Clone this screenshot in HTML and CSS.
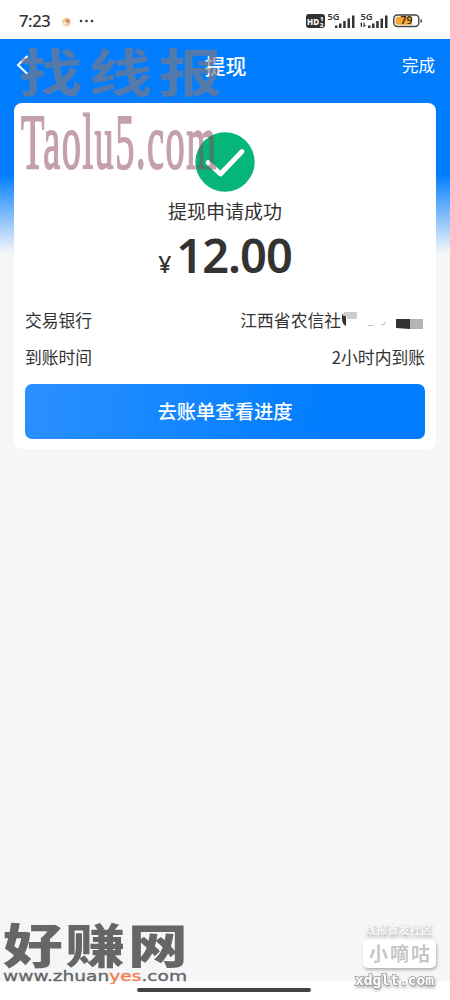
FILE: index.html
```html
<!DOCTYPE html>
<html lang="zh-CN">
<head>
<meta charset="utf-8">
<title>提现</title>
<link rel="stylesheet" href="styles.css">
</head>
<body>
<div class="screen">
  <div class="status">
    <span class="clock">7:23</span>
    <svg class="status-left" width="34" height="16" viewBox="0 0 34 16">
      <circle cx="6.500" cy="9" r="4.300" fill="#ecc9a9"/><circle cx="7.500" cy="8" r="2" fill="#d88f59"/><circle cx="5" cy="10" r="1.600" fill="#f8eadc"/>
      <g fill="#333"><circle cx="21" cy="8" r="1.300"/><circle cx="26.500" cy="8" r="1.300"/><circle cx="32" cy="8" r="1.300"/></g>
    </svg>
    <svg class="status-right" width="120" height="18" viewBox="0 0 120 18">
      <rect x="2" y="2" width="19" height="14" rx="3" fill="#333"/>
      <text class="sys heavy" x="3" y="12.500" font-size="9" fill="#fff" textLength="12" lengthAdjust="spacingAndGlyphs">HD</text>
      <text class="sys heavy" x="16" y="8.500" font-size="6" fill="#fff">1</text>
      <text class="sys heavy" x="16" y="15" font-size="6" fill="#fff">2</text>
      <g fill="#333">
        <text class="sys semi" x="23.500" y="8" font-size="8.500" textLength="12" lengthAdjust="spacingAndGlyphs">5G</text>
        <path d="M31 13.500h2.500V16H31zM35 11.500h2.500V16H35zM39.200 9h2.500v7h-2.500zM43.500 6.500H46V16h-2.500zM48 3.500h2.500V16H48z"/>
        <text class="sys semi" x="56.500" y="8" font-size="8.500" textLength="12" lengthAdjust="spacingAndGlyphs">5G</text>
        <path d="M64 13.500h2.500V16H64zM68 11.500h2.500V16H68zM72.200 9h2.500v7h-2.500zM76.500 6.500H79V16h-2.500zM81 3.500h2.500V16H81z"/>
        <path d="M56 12l2-2v5h-1.200v-2.500zM59.500 15.500v-5h1.200v2.500h1.500z"/>
      </g>
      <rect x="89.800" y="3" width="25" height="11.500" rx="3.500" fill="#fff" stroke="#444" stroke-width="1.400"/>
      <path d="M93.500 4.700H108v8H93.500q-2 0-2-2v-4q0-2 2-2z" fill="#f5a837"/>
      <path d="M116.500 7v4q1.700-.5 1.700-2t-1.700-2z" fill="#444"/>
      <text class="sys semi" x="96.500" y="12.300" font-size="10" fill="#3b2c17" textLength="12" lengthAdjust="spacingAndGlyphs">79</text>
    </svg>
  </div>
  <div class="body">
    <header class="bar">
      <svg class="back" width="14" height="22" viewBox="0 0 14 22"><path d="M11.500 2L2 11l9.500 9" fill="none" stroke="#fff" stroke-width="2"/></svg>
      <h1 class="title">提现</h1>
      <span class="done">完成</span>
    </header>
    <main class="card">
      <svg class="tick" width="60" height="60" viewBox="0 0 60 60"><circle cx="30" cy="30" r="29.700" fill="#06b578"/><path d="M13 30.500L25.500 42 47 19.500" fill="none" stroke="#fff" stroke-width="4.800" stroke-linecap="round" stroke-linejoin="round"/></svg>
      <p class="message">提现申请成功</p>
      <p class="amount"><span class="yen">¥</span><span class="value">12.00</span></p>
      <div class="row"><span>交易银行</span><span class="bank">江西省农信社
        <svg class="mask" width="84" height="20" viewBox="0 0 84 20"><path d="M1 4l4 2v10q-4-2-4-7z" fill="#333"/><path d="M3 2h13v7H6V6H2z" fill="#ccc"/><path d="M27 15h5v1h-5zM40 14h4v1h-4zM43 12h2v1h-2z" fill="#bbb"/><path d="M55 9h14v10l-14-1z" fill="#333"/><path d="M69 9h13v10H69z" fill="#b4b4b4"/></svg>
      </span></div>
      <div class="row"><span>到账时间</span><span>2小时内到账</span></div>
      <button class="action">去账单查看进度</button>
    </main>
  </div>
  <div class="bottom"><div class="handle"></div></div>

  <svg class="watermark" width="450" height="1000" viewBox="0 0 450 1000">
    <text class="mark-zh" transform="translate(19 92) scale(1.240 1)" x="0" y="0" font-size="51" letter-spacing="5.500">找线报</text>
    <text class="mark-en" transform="translate(21 167.500) scale(.485 1)" x="0" y="0" font-size="79" textLength="402" lengthAdjust="spacing">Taolu5.com</text>
    <g fill="#666">
      <text class="zh-heavy" transform="translate(3 962.500) scale(1.270 1)" x="0" y="0" font-size="47" letter-spacing="2.200">好赚网</text>
      <text class="url" y="981" x="3" font-size="14" textLength="184" lengthAdjust="spacingAndGlyphs">www.zhuan<tspan class="accent">yes</tspan>.com</text>
    </g>
    <g class="stamp">
      <text class="zh-bold" x="365" y="934" font-size="11" fill="#f5f6f7" textLength="67">线报首发社区</text>
      <rect x="363" y="940" width="73" height="28" rx="5" fill="#fff"/>
      <text class="zh-bold" x="369" y="961" font-size="19" fill="#c5c6c8" textLength="61">小嘀咕</text>
      <text class="stamp-url" x="355" y="985" font-size="14" fill="#fff" textLength="79" lengthAdjust="spacingAndGlyphs">xdglt.com</text>
    </g>
  </svg>
</div>
</body>
</html>
```
FILE: styles.css
```css
* { box-sizing: border-box; }
body { margin: 0; font-family: "Noto Sans CJK SC", sans-serif; color: #333; }
.screen { position: relative; width: 450px; height: 1000px; display: flex; flex-direction: column; overflow: hidden; background: #fff; }
.status { height: 39px; flex: none; display: flex; align-items: center; padding: 3px 26px 0 19px; }
.clock { font: 500 16.500px/24px "Noto Sans", sans-serif; width: 32px; letter-spacing: -0.4px; }
.status-left { margin-left: 9px; }
.status-right { margin-left: auto; }
.sys { font-family: "Noto Sans", sans-serif; }
.semi { font-weight: 600; }
.heavy { font-weight: 800; }
.body { flex: 1; padding: 0 14px; background: linear-gradient(#007dff 0, #007dff 135px, #f5f6f8 214px); }
.bar { height: 64px; display: grid; grid-template-columns: 1fr auto 1fr; align-items: center; padding: 0 1px 12px 2px; color: #fff; }
.title { margin: 0; font-size: 21px; line-height: 30px; font-weight: 500; }
.done { justify-self: end; font-size: 16.500px; line-height: 24px; }
.card { height: 346px; display: flex; flex-direction: column; align-items: center; padding: 29px 11px 0; border-radius: 8px; background: #fff; }
.tick { flex: none; }
.message { margin: 5px 0 0; font-size: 19px; line-height: 28px; }
.amount { display: flex; align-items: baseline; justify-content: center; gap: 5px; margin: 0; height: 70px; }
.yen { font: 500 23px/60px "Noto Sans", sans-serif; }
.value { font: 600 47px/60px "Noto Sans", sans-serif; letter-spacing: -1px; }
.row { width: 100%; height: 37px; display: flex; align-items: center; justify-content: space-between; font-size: 16.800px; line-height: 24px; }
.row:first-of-type { margin-top: 6px; }
.bank { display: flex; align-items: center; }
.action { width: 100%; height: 55px; margin-top: 9px; padding: 0 0 2px; border: 0; border-radius: 7px; background: linear-gradient(100deg, #2b90ff, #007dff 75%); color: #fff; font: 500 19.300px/28px "Noto Sans CJK SC", sans-serif; }
.bottom { height: 19px; flex: none; display: flex; justify-content: center; padding: 7px 3px 0 0; }
.handle { width: 174px; height: 4px; border-radius: 2px; background: #444; }
.watermark { position: absolute; left: 0; top: 0; pointer-events: none; }
.mark-zh { font-family: "Noto Sans CJK SC", sans-serif; font-weight: 700; fill: #827980; opacity: .65; }
.mark-en { font-family: "Liberation Serif", serif; fill: #8b4658; stroke: #8b4658; stroke-width: 2px; opacity: .5; }
.zh-heavy { font-family: "Noto Sans CJK SC", sans-serif; font-weight: 900; }
.zh-bold { font-family: "Noto Sans CJK SC", sans-serif; font-weight: 700; }
.url { font-family: "DejaVu Sans", sans-serif; stroke: #666; stroke-width: .3px; }
.accent { fill: #f37b4c; stroke: #f37b4c; }
.stamp { filter: drop-shadow(1px 2px 1.500px rgba(0, 0, 0, .28)); }
.stamp-url { font-family: "DejaVu Sans Mono", monospace; font-weight: 700; paint-order: stroke; stroke: #999; stroke-width: 1.500px; }
```
